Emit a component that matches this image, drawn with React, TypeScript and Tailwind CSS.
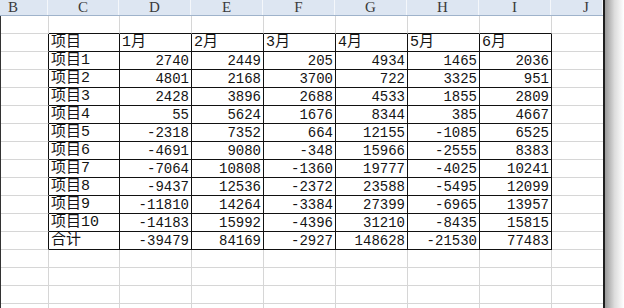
import React from "react";

const cols = ["B", "C", "D", "E", "F", "G", "H", "I", "J"];

const head = ["项目", "1月", "2月", "3月", "4月", "5月", "6月"];
const rows: [string, number[]][] = [
  ["项目1", [2740, 2449, 205, 4934, 1465, 2036]],
  ["项目2", [4801, 2168, 3700, 722, 3325, 951]],
  ["项目3", [2428, 3896, 2688, 4533, 1855, 2809]],
  ["项目4", [55, 5624, 1676, 8344, 385, 4667]],
  ["项目5", [-2318, 7352, 664, 12155, -1085, 6525]],
  ["项目6", [-4691, 9080, -348, 15966, -2555, 8383]],
  ["项目7", [-7064, 10808, -1360, 19777, -4025, 10241]],
  ["项目8", [-9437, 12536, -2372, 23588, -5495, 12099]],
  ["项目9", [-11810, 14264, -3384, 27399, -6965, 13957]],
  ["项目10", [-14183, 15992, -4396, 31210, -8435, 15815]],
  ["合计", [-39479, 84169, -2927, 148628, -21530, 77483]],
];

const gridCls = "grid grid-cols-[48px_71px_72px_72px_72px_72px_72px_72px_52px]";

function Cell({ col, inTable, topOfTable, children, right }: {
  col: number; inTable: boolean; topOfTable?: boolean; children?: React.ReactNode; right?: boolean;
}) {
  const tableCol = col >= 1 && col <= 7;
  const rb = inTable && (col === 0 || tableCol) ? "border-r-[#111]" : "border-r-[#d6d6d6]";
  const bb = (inTable || topOfTable) && tableCol ? "border-b-[#111]" : "border-b-[#d6d6d6]";
  return (
    <div className={`h-[18px] border-r border-b ${rb} ${bb} flex items-center text-[#141414] leading-[16px] ${right ? "justify-end pr-[2px] pt-[1px]" : "pl-[2px]"}`}>
      {children}
    </div>
  );
}

// 标签: 数字用 mono, 中文回落到 Noto CJK
function Label({ text }: { text: string }) {
  return (
    <span className="whitespace-nowrap font-['Liberation_Mono','Noto_Sans_CJK_SC',monospace] text-[15px]">{text}</span>
  );
}

export default function App() {
  const blankBelow = 4;
  return (
    <div className="w-[624px] h-[308px] overflow-hidden bg-white flex">
      <div className="w-[603px] flex flex-col">
        <div className={`${gridCls} h-[16px] bg-[#dde6f2] border-b border-[#9fb3cb]`}>
          {cols.map((c, i) => (
            <div key={c}
              className={`border-r border-[#f4f7fb] flex items-center font-['Liberation_Serif',serif] text-[15px] text-[#3a3a3a] leading-none ${i === 0 ? "pl-[8px]" : i === 8 ? "pl-[32px]" : "justify-center"}`}>
              {c}
            </div>
          ))}
        </div>
        <div className="flex-1 border-l border-[#333]">
          <div className={gridCls}>
            {cols.map((c, i) => <Cell key={c} col={i} inTable={false} topOfTable />)}
          </div>
          <div className={gridCls}>
            {cols.map((c, i) => (
              <Cell key={c} col={i} inTable>
                {i >= 1 && i <= 7 ? <Label text={head[i - 1]} /> : null}
              </Cell>
            ))}
          </div>
          {rows.map(([name, vals]) => (
            <div key={name} className={gridCls}>
              {cols.map((c, i) => (
                <Cell key={c} col={i} inTable right={i >= 2 && i <= 7}>
                  {i === 1 ? <Label text={name} /> : null}
                  {i >= 2 && i <= 7 ? (
                    <span className="font-['Liberation_Mono',monospace] text-[14px]">{vals[i - 2]}</span>
                  ) : null}
                </Cell>
              ))}
            </div>
          ))}
          {Array.from({ length: blankBelow }).map((_, r) => (
            <div key={r} className={gridCls}>
              {cols.map((c, i) => <Cell key={c} col={i} inTable={false} />)}
            </div>
          ))}
        </div>
      </div>
      <div className="w-[2px] bg-[#1e1e1e]" />
      <div className="flex-1 bg-gradient-to-r from-[#9a9a9a] via-[#dcdcdc] to-white" />
    </div>
  );
}
